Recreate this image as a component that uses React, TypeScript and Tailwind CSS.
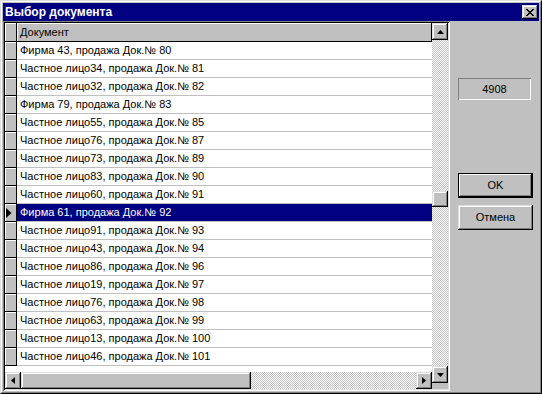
import React, { useId } from "react";

const rows: string[] = [
  "Фирма 43, продажа Док.№ 80",
  "Частное лицо34, продажа Док.№ 81",
  "Частное лицо32, продажа Док.№ 82",
  "Фирма 79, продажа Док.№ 83",
  "Частное лицо55, продажа Док.№ 85",
  "Частное лицо76, продажа Док.№ 87",
  "Частное лицо73, продажа Док.№ 89",
  "Частное лицо83, продажа Док.№ 90",
  "Частное лицо60, продажа Док.№ 91",
  "Фирма 61, продажа Док.№ 92",
  "Частное лицо91, продажа Док.№ 93",
  "Частное лицо43, продажа Док.№ 94",
  "Частное лицо86, продажа Док.№ 96",
  "Частное лицо19, продажа Док.№ 97",
  "Частное лицо76, продажа Док.№ 98",
  "Частное лицо63, продажа Док.№ 99",
  "Частное лицо13, продажа Док.№ 100",
  "Частное лицо46, продажа Док.№ 101",
];

const SELECTED = 9;

const raised =
  "bg-[#c0c0c0] shadow-[inset_-1px_-1px_0_#000,inset_1px_1px_0_#dfdfdf,inset_-2px_-2px_0_#808080,inset_2px_2px_0_#fff]";
const fixedCell =
  "bg-[#c0c0c0] border-r border-b border-black shadow-[inset_1px_1px_0_#fff]";

function Checker({ className }: { className: string }) {
  const id = useId().replace(/:/g, "");
  return (
    <div className={`relative overflow-hidden bg-[#c0c0c0] ${className}`}>
      <svg className="absolute inset-0 w-full h-full" shapeRendering="crispEdges">
        <defs>
          <pattern id={`p${id}`} width={2} height={2} patternUnits="userSpaceOnUse">
            <rect x={0} y={0} width={1} height={1} fill="#ffffff" />
            <rect x={1} y={1} width={1} height={1} fill="#ffffff" />
          </pattern>
        </defs>
        <rect width="100%" height="100%" fill={`url(#p${id})`} />
      </svg>
    </div>
  );
}

function Arrow({ dir }: { dir: "up" | "down" | "left" | "right" }) {
  const pts: Record<string, string> = {
    up: "3.5,0 7,4 0,4",
    down: "0,0 7,0 3.5,4",
    left: "4,0 4,7 0,3.5",
    right: "0,0 4,3.5 0,7",
  };
  const vertical = dir === "up" || dir === "down";
  return (
    <svg
      width={vertical ? 7 : 4}
      height={vertical ? 4 : 7}
      viewBox={vertical ? "0 0 7 4" : "0 0 4 7"}
    >
      <polygon points={pts[dir]} fill="#000" />
    </svg>
  );
}

function CloseGlyph() {
  const px: [number, number][] = [
    [0, 0], [1, 0], [6, 0], [7, 0],
    [1, 1], [2, 1], [5, 1], [6, 1],
    [2, 2], [3, 2], [4, 2], [5, 2],
    [3, 3], [4, 3],
    [2, 4], [3, 4], [4, 4], [5, 4],
    [1, 5], [2, 5], [5, 5], [6, 5],
    [0, 6], [1, 6], [6, 6], [7, 6],
  ];
  return (
    <svg width={8} height={7} viewBox="0 0 8 7" shapeRendering="crispEdges">
      {px.map(([x, y], i) => (
        <rect key={i} x={x} y={y} width={1} height={1} fill="#000" />
      ))}
    </svg>
  );
}

export default function App() {
  return (
    <div className="w-[542px] h-[394px] bg-[#c0c0c0] border border-t-[#dfdfdf] border-l-[#dfdfdf] border-r-black border-b-black font-['Liberation_Sans',Arial,sans-serif] text-[11px] text-black leading-none select-none">
      <div className="h-full border border-t-white border-l-white border-r-[#808080] border-b-[#808080] p-px flex flex-col">
        {/* Title bar */}
        <div className="h-[18px] bg-[#000080] flex items-center justify-between pl-[2px] pr-[1px]">
          <span className="text-white font-bold text-[12px]">Выбор документа</span>
          <div className={`w-[16px] h-[14px] flex items-center justify-center ${raised}`}>
            <CloseGlyph />
          </div>
        </div>

        {/* Content */}
        <div className="flex h-[370px]">
          {/* Grid */}
          <div className="w-[447px] h-full p-[2px] shadow-[inset_1px_1px_0_#808080,inset_-1px_-1px_0_#fff,inset_2px_2px_0_#000,inset_-2px_-2px_0_#dfdfdf]">
            <div className="flex h-full">
              <div className="w-[427px] flex flex-col">
                <div className="h-[349px] bg-white flex flex-col">
                  <div className="h-[19px] flex">
                    <div className={`w-[12px] ${fixedCell}`} />
                    <div className={`flex-1 flex items-center pl-[3px] ${fixedCell}`}>Документ</div>
                  </div>
                  {rows.map((r, i) => {
                    const sel = i === SELECTED;
                    return (
                      <div key={i} className="h-[18px] flex">
                        <div className={`w-[12px] flex items-center pl-[1px] ${fixedCell}`}>
                          {sel && (
                            <svg width={6} height={10} viewBox="0 0 6 10">
                              <polygon points="0,0 5.5,5 0,10" fill="#000" />
                            </svg>
                          )}
                        </div>
                        <div
                          className={`flex-1 flex items-center pl-[3px] border-b border-[#c0c0c0] ${
                            sel ? "bg-[#000080] text-white" : "bg-white"
                          }`}
                        >
                          {r}
                        </div>
                      </div>
                    );
                  })}
                </div>
                {/* Horizontal scrollbar */}
                <div className="h-[17px] flex">
                  <div className={`w-[16px] flex items-center justify-center ${raised}`}>
                    <Arrow dir="left" />
                  </div>
                  <div className={`w-[230px] ${raised}`} />
                  <Checker className="flex-1" />
                  <div className={`w-[16px] flex items-center justify-center ${raised}`}>
                    <Arrow dir="right" />
                  </div>
                </div>
              </div>
              {/* Vertical scrollbar */}
              <div className="w-[16px] flex flex-col">
                <div className="h-[360px] flex flex-col">
                  <div className={`h-[17px] flex items-center justify-center ${raised}`}>
                    <Arrow dir="up" />
                  </div>
                  <Checker className="h-[151px]" />
                  <div className={`h-[16px] ${raised}`} />
                  <Checker className="flex-1" />
                  <div className={`h-[17px] flex items-center justify-center ${raised}`}>
                    <Arrow dir="down" />
                  </div>
                </div>
                <div className="flex-1 bg-[#c0c0c0]" />
              </div>
            </div>
          </div>

          {/* Right panel */}
          <div className="flex-1 flex flex-col pl-[8px]">
            <div className="mt-[57px] w-[73px] h-[22px] flex items-center justify-center shadow-[inset_1px_1px_0_#808080,inset_-1px_-1px_0_#fff]">
              4908
            </div>
            <div className="mt-[73px] w-[75px] h-[25px] border border-black flex items-center justify-center bg-[#c0c0c0] shadow-[inset_-1px_-1px_0_#000,inset_1px_1px_0_#fff,inset_-2px_-2px_0_#808080]">
              OK
            </div>
            <div className={`mt-[7px] w-[75px] h-[25px] flex items-center justify-center ${raised}`}>
              Отмена
            </div>
          </div>
        </div>
      </div>
    </div>
  );
}
